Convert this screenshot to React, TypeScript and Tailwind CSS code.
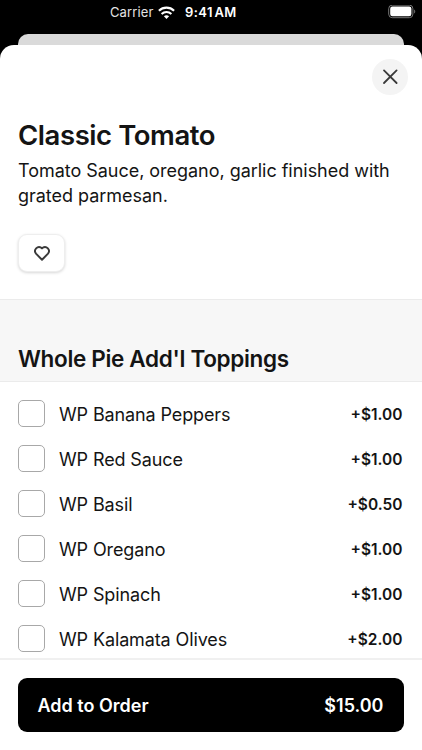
import React from "react";

const toppings = [
  { name: "WP Banana Peppers", price: "+$1.00" },
  { name: "WP Red Sauce", price: "+$1.00" },
  { name: "WP Basil", price: "+$0.50" },
  { name: "WP Oregano", price: "+$1.00" },
  { name: "WP Spinach", price: "+$1.00" },
  { name: "WP Kalamata Olives", price: "+$2.00" },
];

function StatusBar() {
  return (
    <div className="flex h-[24px] items-center text-[13px] leading-6 text-white">
      <span className="ml-[110px] w-[48px] whitespace-nowrap tracking-[0.12px] text-[#e4e4e4]">Carrier</span>
      <svg className="block h-[13px] w-[17px]" viewBox="0 0 17 13" fill="none" stroke="#fff" strokeWidth="2.1">
        <path d="M.9 4.800C5.100.600 11.900.600 16.100 4.800" />
        <path d="M3.600 7.900c2.800-2.600 7-2.600 9.800 0" />
        <path d="M8.500 12.900 5.900 10.200c1.400-1.300 3.800-1.300 5.200 0Z" fill="#fff" stroke="none" />
      </svg>
      <span className="ml-[10px] whitespace-nowrap font-semibold tracking-[0.4px] [word-spacing:-2px]">9:41 AM</span>
      <svg className="ml-auto mr-[6px] block h-[14px] w-[28px]" viewBox="0 0 28 14" fill="none">
        <rect x="0.7" y="0.1" width="24.2" height="12.6" rx="3.6" stroke="#767676" />
        <rect x="2.2" y="1.6" width="21.2" height="9.6" rx="2.2" fill="#fff" />
        <path d="M26.2 4.500v4c1.400-.5 1.400-3.500 0-4Z" fill="#767676" />
      </svg>
    </div>
  );
}

export default function App() {
  return (
    <div className="flex h-[750px] w-[422px] flex-col overflow-hidden bg-black font-['Inter',sans-serif] text-[#141414]">
      <StatusBar />
      <div className="mx-[18px] mt-[10px] h-[11px] shrink-0 rounded-t-[10px] bg-[#dadada]" />
      <main className="flex min-h-0 flex-1 flex-col overflow-hidden rounded-t-[14px] bg-white">
        <header className="flex h-[254px] shrink-0 flex-col">
          <button aria-label="Close" className="mr-[14px] mt-[14px] flex size-9 items-center justify-center self-end rounded-full bg-[#f4f4f4]">
            <svg className="size-4" viewBox="0 0 16 16" fill="none" stroke="#3a3a3a" strokeWidth="1.8" strokeLinecap="round">
              <path d="m2 1.400 12.600 12.600M14.600 1.400 2 14" />
            </svg>
          </button>
          <div className="ml-[18px] flex flex-col items-start">
            <h1 className="mt-[23px] whitespace-nowrap text-[27.500px] font-semibold leading-[34px] tracking-[-0.43px]">Classic Tomato</h1>
            <p className="mt-[6px] whitespace-nowrap text-[18px] leading-[25px] tracking-[-0.03px]">
              Tomato Sauce, oregano, garlic finished with
              <br />
              grated parmesan.
            </p>
            <button aria-label="Favorite" className="mt-[26px] flex h-[38px] w-[47px] items-center justify-center rounded-[9px] border border-[#eeeeee] bg-white shadow-[0_1px_3px_rgba(0,0,0,0.16)]">
              <svg className="size-[18px]" viewBox="0 0 24 24" fill="none" stroke="#3a3a3a" strokeWidth="2.6" strokeLinejoin="round">
                <path d="M12 21 4 12.900a5.400 5.400 0 0 1 7.200-7.900l.8.800.8-.8a5.400 5.400 0 0 1 7.200 7.900Z" />
              </svg>
            </button>
          </div>
        </header>
        <div className="flex h-[83px] shrink-0 items-end border-y border-[#ebebeb] bg-[#f7f7f7] pb-[7px] pl-[18px]">
          <h2 className="whitespace-nowrap text-[22.500px] font-semibold leading-[30px] tracking-[-0.33px]">Whole Pie Add'l Toppings</h2>
        </div>
        <ul className="h-[276px] shrink-0 overflow-hidden pt-[9px]">
          {toppings.map((item) => (
            <li key={item.name} className="flex h-[45px] items-center pl-[18px] pr-[19.500px]">
              <span className="size-[27px] shrink-0 rounded-[5px] border border-[#a8a8a8] bg-white" />
              <span className="ml-[14px] whitespace-nowrap pt-[2px] text-[18px] leading-6 tracking-[-0.12px]">{item.name}</span>
              <span className="ml-auto whitespace-nowrap pt-[2px] text-[15.500px] font-semibold leading-6">{item.price}</span>
            </li>
          ))}
        </ul>
        <footer className="flex-1 border-t-2 border-[#f0f0f0] bg-white px-[18px] pt-[18px]">
          <button className="flex h-[54px] w-full items-center justify-between rounded-[9px] bg-black pl-[19.500px] pr-[20.500px] pt-px text-[18px] font-semibold text-white">
            <span>Add to Order</span>
            <span>$15.00</span>
          </button>
        </footer>
      </main>
    </div>
  );
}
